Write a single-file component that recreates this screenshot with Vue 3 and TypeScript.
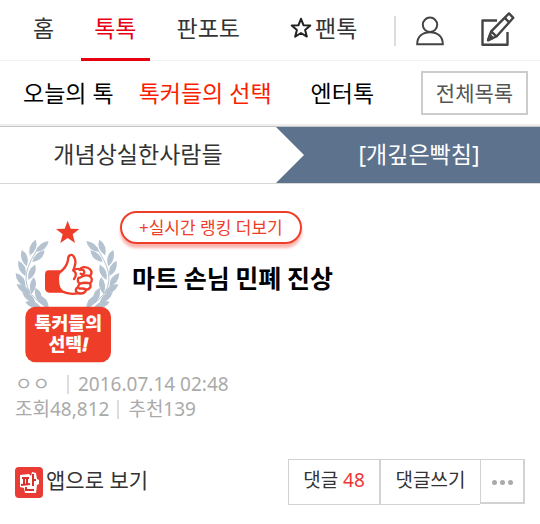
<script setup lang="ts">
interface Leaf {
  x: number
  y: number
  angle: number
}

const topics: { label: string; active: boolean }[] = [
  { label: '오늘의 톡', active: false },
  { label: '톡커들의 선택', active: true },
  { label: '엔터톡', active: false },
]

const leaves: Leaf[] = [
  { x: 98, y: 128, angle: 20 },
  { x: 126, y: 125, angle: 50 },
  { x: 115, y: 154, angle: 46 },
  { x: 73, y: 160, angle: -17 },
  { x: 66, y: 191, angle: -25 },
  { x: 95, y: 202, angle: 24 },
  { x: 62, y: 225, angle: -36 },
  { x: 98, y: 242, angle: 8 },
  { x: 71, y: 253, angle: -56 },
  { x: 87, y: 278, angle: -52 },
  { x: 115, y: 273, angle: -20 },
  { x: 131, y: 291, angle: -38 },
  { x: 100, y: 300, angle: -70 },
]

const wreathSides: string[] = ['', 'matrix(-1 0 0 1 405 0)']
</script>

<template>
  <div class="page">
    <nav class="main-nav">
      <a href="#" class="tab home">홈</a>
      <a href="#" class="tab current" aria-current="page">톡톡</a>
      <a href="#" class="tab photo">판포토</a>
      <a href="#" class="tab fan">
        <svg class="star" viewBox="0 0 22 22" aria-hidden="true">
          <path d="M11 1.8 13.5 8.2 20.3 8.6 15.1 12.9 16.8 19.6 11 16 5.2 19.6 6.9 12.9 1.7 8.6 8.5 8.2Z" />
        </svg>
        <span>팬톡</span>
      </a>
      <div class="tools">
        <a href="#" aria-label="내 정보">
          <svg class="user" viewBox="0 0 28 30" aria-hidden="true">
            <circle cx="14" cy="8.8" r="7.2" />
            <path d="M1.2 28.2C1.2 20.5 6.5 16.2 14 16.2S26.8 20.5 26.8 28.2Z" />
          </svg>
        </a>
        <a href="#" aria-label="글쓰기">
          <svg class="write" viewBox="0 0 34 36" aria-hidden="true">
            <path d="M16 9.5H1.5V33.8H26.5V21" />
            <path d="M28 2.4 32.3 6.8 15.5 25.5 7.2 29 10.2 20.3Z" />
            <path d="M23.8 6.9 28.2 11.3M10.2 20.3 15.5 25.5" />
            <path class="tip" d="M9 24 12 27 7 29.3Z" />
          </svg>
        </a>
      </div>
    </nav>

    <nav class="sub-nav">
      <a v-for="topic in topics" :key="topic.label" href="#" :class="{ active: topic.active }">{{ topic.label }}</a>
      <button type="button" class="all">전체목록</button>
    </nav>

    <div class="category">
      <a href="#" class="group">개념상실한사람들</a>
      <a href="#" class="board">[개깊은빡침]</a>
    </div>

    <main>
      <header class="post-head">
        <svg class="emblem" viewBox="45 39 315 435" role="img" aria-label="톡커들의 선택!">
          <g v-for="side in wreathSides" :key="side" class="laurel" :transform="side">
            <path class="stem" d="M108 140Q76 190 78 225Q80 270 140 308" />
            <path
              v-for="(leaf, i) in leaves"
              :key="i"
              d="M0-26Q20-3 0 25Q-17 0 0-26Z"
              :transform="`translate(${leaf.x} ${leaf.y}) rotate(${leaf.angle})`"
            />
          </g>
          <path class="red" d="M203 47 212 71 238 72 218 88 225 114 203 99 181 114 188 88 168 72 194 71Z" />
          <path class="red" d="M184 196H146Q135 196 135 209V250Q136 263 148 263H192Z" />
          <path
            class="hand"
            d="M178 203Q200 188 204 165C204 148 216 147 221 154C230 168 226 180 220 196C226 192 234 190 240 194C243 184 262 184 270 193C277 201 275 208 269 213C278 219 277 230 270 235C275 246 268 253 259 254C255 266 243 267 232 264C222 269 200 266 188 260Q174 250 174 228Q172 211 178 203Z"
          />
          <path
            class="line"
            d="M220 196Q234 206 222 222M240 194Q253 192 253 203Q249 210 242 206M240 218Q254 208 269 213M236 218Q229 231 240 236Q255 231 270 235M240 236Q229 246 239 251Q250 249 259 254M232 264Q224 257 230 249"
          />
          <rect class="red" x="76" y="305" width="257" height="167" rx="31" />
          <text x="205" y="374">톡커들의</text>
          <text x="205" y="439">선택<tspan class="bang">!</tspan></text>
        </svg>
        <div class="heading">
          <a href="#" class="more">+실시간 랭킹 더보기</a>
          <h1>마트 손님 민폐 진상</h1>
        </div>
      </header>

      <div class="meta">
        <p><span class="writer">ㅇㅇ</span><time datetime="2016-07-14T02:48">2016.07.14 02:48</time></p>
        <p><span class="views">조회48,812</span><span class="likes">추천139</span></p>
      </div>

      <div class="actions">
        <a href="#" class="app">
          <svg viewBox="0 0 28 31" aria-hidden="true">
            <rect class="app-bg" width="28" height="31" rx="4" />
            <path class="paper" d="M5 8 14 7 16 9 17 5 21 6 22 12 24 13 24 17 22 18 21 26H10L9 21 5 20Z" />
            <path class="glyph" d="M7 11H14M9 11V17M12 11V17M6 18 15 17M18 7V19M18 13H21M11 20V23H19" />
          </svg>
          <span>앱으로 보기</span>
        </a>
        <div class="buttons">
          <button type="button" class="count">댓글 <em>48</em></button>
          <button type="button" class="reply">댓글쓰기</button>
          <button type="button" class="dots" aria-label="더보기"><i></i><i></i><i></i></button>
        </div>
      </div>
    </main>
  </div>
</template>

<style>
body {
  background: #fff;
}
</style>

<style scoped>
.page {
  font-family: "Noto Sans", "Noto Sans CJK KR", sans-serif;
  font-size: 23px;
  line-height: 32px;
  color: #333;
}
* {
  box-sizing: border-box;
}
a {
  color: inherit;
  text-decoration: none;
  white-space: nowrap;
}
svg {
  display: block;
  flex: none;
}
button {
  font: inherit;
  color: inherit;
  background: #fff;
  border: 0 solid #d2d2d2;
  border-radius: 0;
  padding: 0;
  white-space: nowrap;
}
.main-nav {
  display: flex;
  height: 61px;
  padding-left: 20px;
  border-bottom: 1px solid #f2f2f2;
}
.tab {
  display: flex;
  align-items: center;
  height: 61px;
  padding: 0 13px 6px;
}
.home {
  margin-right: 14px;
}
.current {
  color: #e60012;
  border-bottom: 3px solid #e60012;
  padding-bottom: 3px;
}
.photo {
  margin-left: 14px;
}
.fan {
  margin-left: 24px;
  gap: 3px;
}
.star {
  width: 22px;
  height: 22px;
  fill: none;
  stroke: #222;
  stroke-width: 2;
  stroke-linejoin: round;
}
.tools {
  display: flex;
  align-items: center;
  gap: 37px;
  height: 30px;
  margin: 16px 25px 0 auto;
  padding-left: 20px;
  border-left: 2px solid #ddd;
}
.user {
  width: 28px;
  height: 30px;
  fill: none;
  stroke: #444;
  stroke-width: 2;
}
.write {
  width: 34px;
  height: 36px;
  margin-bottom: 4px;
  fill: none;
  stroke: #444;
  stroke-width: 2.4;
  stroke-linejoin: round;
}
.write .tip {
  fill: #444;
}
.sub-nav {
  display: flex;
  align-items: center;
  gap: 25px;
  height: 65px;
  padding: 0 12px 0 23px;
  color: #000;
  border-bottom: 2px solid #eee;
}
.sub-nav .active {
  margin-right: 14px;
  color: #fa1e00;
}
.all {
  width: 107px;
  height: 44px;
  margin-left: auto;
  font-size: 21px;
  color: #555;
  border: 2px solid #ccc;
}
.category {
  display: grid;
  grid-template-columns: 276fr 264fr;
  height: 58px;
  line-height: 54px;
  text-align: center;
  border-top: 1px solid #c4c4c4;
  border-bottom: 1px solid #d8d8d8;
}
.board {
  padding-left: 22px;
  color: #fff;
  background: #5c728d;
  clip-path: polygon(0 0, 100% 0, 100% 100%, 0 100%, 28px 50%);
}
main {
  padding: 27px 15px 0;
}
.post-head {
  display: flex;
}
.emblem {
  width: 105px;
  height: 145px;
  margin-top: 7px;
}
.laurel {
  fill: #b5c3d1;
}
.stem {
  fill: none;
  stroke: #b5c3d1;
  stroke-width: 3;
}
.red {
  fill: #ee3d28;
}
.hand {
  fill: #fff;
  stroke: #ee3d28;
  stroke-width: 7;
  stroke-linejoin: round;
}
.line {
  fill: none;
  stroke: #ee3d28;
  stroke-width: 7;
  stroke-linecap: round;
}
.emblem text {
  font-family: "Liberation Sans", "Noto Sans CJK KR", sans-serif;
  font-size: 55px;
  font-weight: 900;
  text-anchor: middle;
  fill: #fff;
}
.bang {
  font-style: italic;
  stroke: #fff;
  stroke-width: 3;
}
.more {
  display: block;
  width: fit-content;
  padding: 0 17px;
  font-size: 17px;
  line-height: 29px;
  color: #ee3d28;
  border: 2px solid #ee3d28;
  border-radius: 17px;
  box-shadow: 0 4px 3px #f9b5ad;
}
h1 {
  margin: 15px 0 0 12px;
  font-family: "Noto Sans CJK KR", sans-serif;
  font-size: 25px;
  line-height: 36px;
  font-weight: 600;
  color: #000;
}
.meta {
  margin-top: 9px;
  font-size: 19px;
  line-height: 25px;
  color: #aaa;
}
.meta p {
  display: flex;
  align-items: center;
  margin: 0;
}
.writer {
  width: 52px;
}
.meta time {
  padding-left: 9px;
}
.likes {
  margin-left: 8px;
  padding-left: 9px;
}
.meta time,
.likes {
  line-height: 19px;
  border-left: 2px solid #ddd;
}
.actions {
  display: flex;
  justify-content: space-between;
  margin-top: 37px;
}
.app {
  display: flex;
  align-items: center;
  gap: 3px;
  font-size: 21px;
}
.app svg {
  width: 28px;
  height: 31px;
}
.app span {
  padding-bottom: 4px;
}
.app-bg {
  fill: #e83c34;
}
.paper {
  fill: #fff;
}
.glyph {
  fill: none;
  stroke: #d8302a;
  stroke-width: 2;
}
.buttons {
  display: flex;
  align-items: flex-start;
  height: 46px;
  font-size: 19px;
}
.count,
.reply {
  height: 46px;
  padding-bottom: 4px;
  border-width: 1px 0 1px 1px;
}
.count {
  width: 91px;
}
.count em {
  font-style: normal;
  color: #f03535;
}
.reply {
  width: 101px;
  border-left-width: 2px;
}
.dots {
  display: flex;
  align-items: center;
  justify-content: center;
  gap: 3px;
  width: 45px;
  height: 45px;
  padding-top: 3px;
  border-width: 1px 2px 2px 1px;
}
.dots i {
  width: 5px;
  height: 5px;
  border-radius: 50%;
  background: #aaa;
}
</style>
